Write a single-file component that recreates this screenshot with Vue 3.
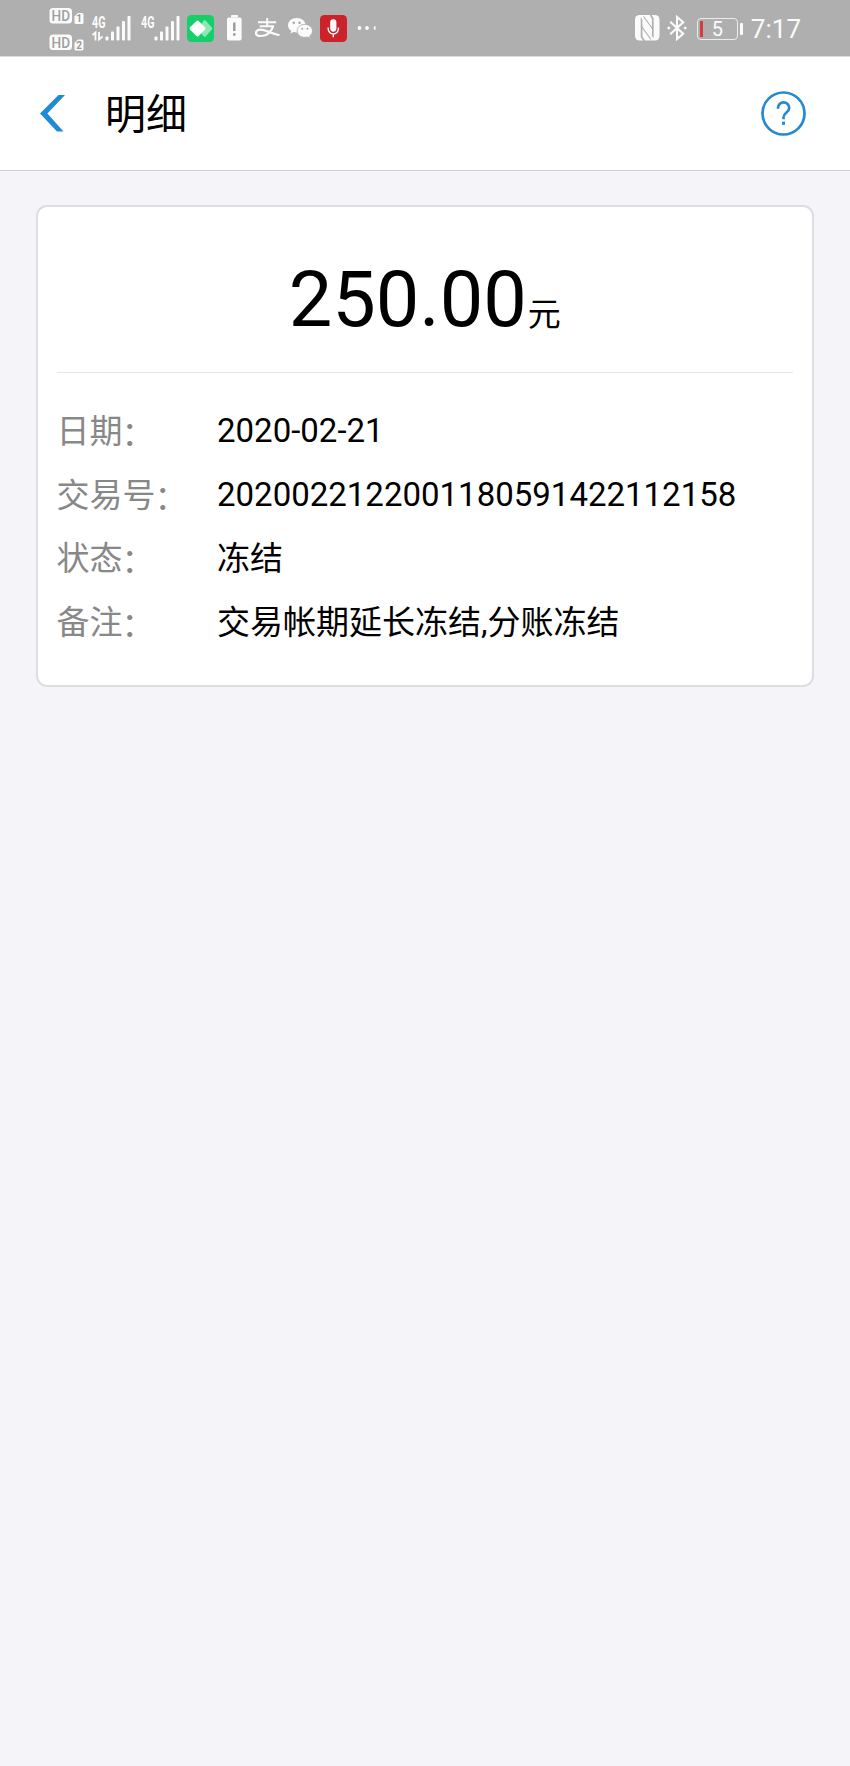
<template>
  <div class="page">
    <div class="status-bar">
      <div class="status-group">
        <!-- HD 卡1 / 卡2 -->
        <svg class="icon-hd" width="38" height="56" viewBox="0 0 38 56">
          <g v-for="sim in sims" :key="sim.no" :transform="`translate(0 ${sim.y})`">
            <rect x="1.5" y="0" width="22.5" height="15.5" rx="3.5" fill="#fbfbfb" />
            <text x="12.8" y="13.2" class="hd-text" textLength="18.5" lengthAdjust="spacingAndGlyphs">HD</text>
            <path d="M30 5H34a1.5 1.5 0 0 1 1.5 1.5v8a1.5 1.5 0 0 1-1.5 1.5h-6a1.5 1.5 0 0 1-1.5-1.5V8.5z" fill="#fbfbfb" />
            <text x="31.2" y="14" class="sim-text">{{ sim.no }}</text>
          </g>
        </svg>

        <svg
          v-for="(signal, i) in signals"
          :key="i"
          class="icon-signal"
          width="40"
          height="56"
          viewBox="0 0 40 56"
        >
          <text x="0" y="27.5" class="net-text" textLength="13.5" lengthAdjust="spacingAndGlyphs">4G</text>
          <path
            v-if="signal.active"
            d="M0.5 35l3-2.5v8M7 32v7.5l3.5-3"
            fill="none"
            stroke="#fbfbfb"
            stroke-width="1.8"
          />
          <rect
            v-for="n in 5"
            :key="n"
            :x="13.5 + (n - 1) * 5.5"
            :y="signalTops[n - 1]"
            width="3"
            :height="40.5 - signalTops[n - 1]"
            rx="0.8"
            fill="#fbfbfb"
          />
        </svg>

        <svg class="icon-green" width="27" height="27" viewBox="0 0 27 27">
          <rect width="27" height="27" rx="4.5" fill="#15cf69" />
          <path d="M17 5.2q.8-.5 1.6.2l6.2 7q.9 1.1 0 2.1l-6.2 7q-.8.8-1.8 0l-6-7.5z" fill="#8be9b6" />
          <path d="M9.4 6q1.1-1 2.2 0l6.3 6.3q1.1 1.2 0 2.4L11.6 21q-1.1 1-2.2 0L3.1 14.7q-1.1-1.2 0-2.4z" fill="#fff" />
        </svg>

        <svg class="icon-low" width="15" height="26" viewBox="0 0 15 26">
          <rect x="4" y="0" width="7" height="2.4" rx="0.8" fill="#fbfbfb" />
          <rect x="0" y="2.6" width="14.6" height="23" rx="1.8" fill="#fbfbfb" />
          <path d="M7.3 7.500v8.500M7.3 18.200v2.600" stroke="#9a9a9a" stroke-width="2.4" />
        </svg>

        <svg class="icon-alipay" width="25" height="20" viewBox="0 0 25 20">
          <g fill="none" stroke="#fbfbfb">
            <path d="M3 4.300h18.200M12.200 0v8M4.700 8.300h14.200" stroke-width="1.9" />
            <path d="M18.200 8.300C16 14 11.500 18 5.500 18 2.500 18 1 16.600 1 14.900c0-1.900 1.700-3.200 4.500-3.200 4.500 0 9 3 19 5.600" stroke-width="2.2" />
          </g>
        </svg>

        <svg class="icon-wechat" width="25" height="21" viewBox="0 0 25 21">
          <path d="M8.800 0C3.900 0 0 3.200 0 7.200c0 2.300 1.300 4.300 3.300 5.600l-.9 2.700 3.200-1.600c1 .3 2.100.5 3.200.5 4.900 0 8.800-3.200 8.800-7.200S13.700 0 8.800 0z" fill="#fbfbfb" />
          <path d="M16.800 6.400c4.300 0 7.700 2.900 7.700 6.500 0 2-1.100 3.800-2.800 5l.7 2.500-2.800-1.400c-.9.300-1.800.4-2.800.4-4.300 0-7.700-2.900-7.700-6.500s3.400-6.500 7.700-6.500z" fill="#fbfbfb" stroke="#afafaf" stroke-width="0.9" />
          <g fill="#a5a5a5">
            <circle cx="5.8" cy="4.8" r="1.2" />
            <circle cx="11.6" cy="4.8" r="1.2" />
            <circle cx="14.2" cy="10.8" r="1" />
            <circle cx="19.4" cy="10.8" r="1" />
          </g>
        </svg>

        <svg class="icon-mic" width="27" height="27" viewBox="0 0 27 27">
          <rect width="27" height="27" rx="4.5" fill="#cb2329" />
          <rect x="10.2" y="4.3" width="6.2" height="12.4" rx="3.1" fill="#fff" />
          <path d="M8.200 12.500v1.300a5.100 5.100 0 0 0 10.200 0v-1.300M13.300 19v3.200" fill="none" stroke="#fff" stroke-width="1.4" />
        </svg>

        <svg class="icon-more" width="20" height="6" viewBox="0 0 20 6">
          <circle cx="2.5" cy="3" r="1.9" fill="#fbfbfb" />
          <circle cx="10" cy="3" r="1.9" fill="#fbfbfb" />
          <path d="M18.500 1.100a1.900 1.900 0 0 0 0 3.800z" fill="#fbfbfb" />
        </svg>
      </div>

      <div class="status-group">
        <svg class="icon-nfc" width="25" height="26" viewBox="0 0 25 26">
          <rect width="24.5" height="25.5" rx="4.5" fill="#fbfbfb" />
          <path d="M9.500 26L6.600 22V5L17.800 20.500V3.500L15.500 0" fill="none" stroke="#afafaf" stroke-width="1.7" />
          <path d="M8.500 1.500L17.800 14M6.600 11.500L16 24.500" fill="none" stroke="#afafaf" stroke-width="1.1" />
          <path d="M7.400 3.500L17 16.500V21L7.400 8.500z" fill="#fbfbfb" />
        </svg>

        <svg class="icon-bt" width="20" height="26" viewBox="0 0 20 26">
          <path d="M3.200 6.700l13 12L10 24V2l6.200 5.300-13 12" fill="none" stroke="#fbfbfb" stroke-width="2.1" />
          <path d="M0 13l1.800-1.800L3.600 13l-1.800 1.800zM16.400 13l1.800-1.800L20 13l-1.800 1.800z" fill="#fbfbfb" />
        </svg>

        <div class="battery">
          <span class="battery-level"></span>
          <span class="battery-text">5</span>
        </div>
        <span class="battery-nub"></span>
        <span class="clock">7:17</span>
      </div>
    </div>

    <header class="nav-bar">
      <svg class="nav-back" width="26" height="37" viewBox="0 0 26 37">
        <path d="M18.500 0H25L7.400 18.600 23.500 36.500H17L0 18.600z" fill="#1f8ad6" />
      </svg>
      <h1 class="nav-title">明细</h1>
      <svg class="nav-help" width="45" height="45" viewBox="0 0 45 45">
        <circle cx="22.5" cy="22.5" r="21" fill="none" stroke="#2389d3" stroke-width="2.7" />
        <path d="M17 17.800v-.9a5.600 5.600 0 0 1 11.200 0c0 4.600-5.700 4.600-5.700 9.600v1.700" fill="none" stroke="#2389d3" stroke-width="2.7" />
        <rect x="21" y="30.7" width="3" height="3.1" fill="#2389d3" />
      </svg>
    </header>

    <main class="card">
      <div class="amount">
        <span class="amount-value">250.00</span><span class="amount-unit">元</span>
      </div>
      <dl class="detail-list">
        <div v-for="item in details" :key="item.label" class="detail-row">
          <dt>{{ item.label }}<span class="colon">：</span></dt>
          <dd :class="{ numeric: item.numeric }">{{ item.value }}</dd>
        </div>
      </dl>
    </main>
  </div>
</template>

<script setup>
const sims = [
  { no: 1, y: 8 },
  { no: 2, y: 34.5 },
]

const signals = [{ active: true }, { active: false }]

// 信號格由低到高的頂端位置
const signalTops = [36.5, 31.5, 26.5, 21, 16]

const details = [
  { label: '日期', value: '2020-02-21', numeric: true },
  { label: '交易号', value: '2020022122001180591422112158', numeric: true },
  { label: '状态', value: '冻结' },
  { label: '备注', value: '交易帐期延长冻结,分账冻结' },
]
</script>

<style>
body {
  background-color: #f4f4f9;
}
</style>

<style scoped>
.page {
  min-height: 1766px;
  background-color: #f4f4f9;
  font-family: Roboto, 'Noto Sans CJK SC', sans-serif;
  color: #000;
}

.status-bar {
  display: flex;
  justify-content: space-between;
  height: 57px;
  padding: 0 49px 0 48px;
  background-color: #afafaf;
  border-bottom: 1px solid #dcdcdc;
  box-sizing: border-box;
}

.status-group {
  display: flex;
  align-items: center;
}

.status-group svg {
  flex: none;
}

.hd-text {
  font-size: 15px;
  font-weight: 500;
  text-anchor: middle;
  fill: #a0a0a0;
}

.sim-text {
  font-size: 10px;
  font-weight: 700;
  text-anchor: middle;
  fill: #999;
}

.net-text {
  font-size: 16px;
  font-weight: 700;
  fill: #fbfbfb;
}

.icon-signal {
  margin-left: 6px;
}

.icon-signal + .icon-signal {
  margin-left: 8.5px;
}

.icon-green {
  margin-left: 6.5px;
}

.icon-low {
  margin-left: 13px;
}

.icon-alipay {
  margin-left: 13px;
}

.icon-wechat {
  margin-left: 8px;
}

.icon-mic {
  margin-left: 7px;
}

.icon-more {
  margin-left: 10px;
}

.icon-bt {
  margin-left: 7px;
}

.battery {
  position: relative;
  display: flex;
  align-items: center;
  justify-content: center;
  width: 41px;
  height: 22px;
  margin: 2px 0 0 10px;
  border: 1.5px solid #ececec;
  border-radius: 4px;
  box-sizing: border-box;
}

.battery-level {
  position: absolute;
  left: 2px;
  top: 2px;
  width: 3px;
  height: 16px;
  background-color: #d63c3c;
}

.battery-text {
  font-size: 20px;
  line-height: 20px;
  color: #fbfbfb;
}

.battery-nub {
  width: 3px;
  height: 12px;
  margin: 2px 0 0 2px;
  border-radius: 1px;
  background-color: #fbfbfb;
}

.clock {
  padding-top: 2px;
  margin-left: 8px;
  font-size: 26px;
  line-height: 30px;
  color: #fbfbfb;
}

.nav-bar {
  display: flex;
  align-items: center;
  height: 114px;
  padding: 0 44px 0 40px;
  background-color: #fff;
  border-bottom: 1px solid #cfcfd4;
  box-sizing: border-box;
}

.nav-title {
  flex: 1;
  margin: 0 0 0 39px;
  padding-top: 2px;
  font-size: 41px;
  font-weight: 400;
  line-height: 60px;
}

.card {
  margin: 34px 36px 0 35.5px;
  padding: 0 19px 30px;
  background-color: #fff;
  border: 2px solid #dedee1;
  border-radius: 11px;
}

.amount {
  height: 165px;
  border-bottom: 1px solid #e5e5e5;
  line-height: 185px;
  text-align: center;
  white-space: nowrap;
}

.amount-value {
  font-size: 77.5px;
}

.amount-unit {
  margin-left: 1px;
  font-size: 33px;
}

.detail-list {
  margin: 0;
  padding-top: 27px;
}

.detail-row {
  display: flex;
  height: 63.7px;
  font-size: 33px;
  line-height: 63.7px;
}

.detail-row dt {
  flex: none;
  width: 160.5px;
  color: #888;
}

.detail-row dd {
  margin: 0;
  white-space: nowrap;
}

.detail-row dd.numeric {
  line-height: 61.7px;
}

.colon {
  margin-left: -1px;
  line-height: 1;
  vertical-align: -2px;
}
</style>
